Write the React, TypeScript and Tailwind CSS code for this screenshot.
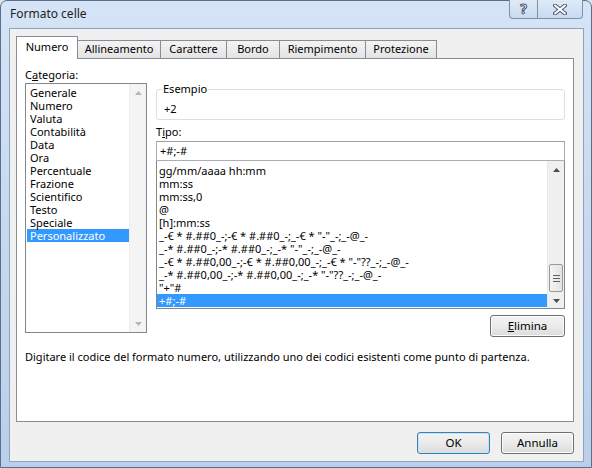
import React from "react";

const categories = [
  "Generale",
  "Numero",
  "Valuta",
  "Contabilità",
  "Data",
  "Ora",
  "Percentuale",
  "Frazione",
  "Scientifico",
  "Testo",
  "Speciale",
  "Personalizzato",
];

const formats = [
  "gg/mm/aaaa hh:mm",
  "mm:ss",
  "mm:ss,0",
  "@",
  "[h]:mm:ss",
  '_-€ * #.##0_-;-€ * #.##0_-;_-€ * "-"_-;_-@_-',
  '_-* #.##0_-;-* #.##0_-;_-* "-"_-;_-@_-',
  '_-€ * #.##0,00_-;-€ * #.##0,00_-;_-€ * "-"??_-;_-@_-',
  '_-* #.##0,00_-;-* #.##0,00_-;_-* "-"??_-;_-@_-',
  '"+"#',
  "+#;-#",
];

const tabs = [
  { label: "Allineamento", w: "w-[84px]" },
  { label: "Carattere", w: "w-[67px]" },
  { label: "Bordo", w: "w-[54px]" },
  { label: "Riempimento", w: "w-[87px]" },
  { label: "Protezione", w: "w-[72px]" },
];

const Arrow = ({ up, dark }: { up?: boolean; dark?: boolean }) => (
  <svg width="7" height="4" viewBox="0 0 7 4" className={up ? "" : "rotate-180"}>
    <path d="M0 4 L3.5 0 L7 4 Z" fill={dark ? "#4d4d4d" : "#b5b5b5"} />
  </svg>
);

const WinButton = ({
  children,
  def,
  className = "",
}: {
  children: React.ReactNode;
  def?: boolean;
  className?: string;
}) => (
  <button
    className={
      "h-[22px] rounded-[3px] border bg-linear-to-b from-[#f3f3f3] via-[#ebebeb] to-[#dcdcdc] text-[11.5px] text-black " +
      (def
        ? "border-[#3c7fb1] shadow-[inset_0_0_0_1px_#c2e4f6] "
        : "border-[#707070] shadow-[inset_0_0_0_1px_#fcfcfc] ") +
      className
    }
  >
    {children}
  </button>
);

export default function App() {
  return (
    <div className="w-[592px] h-[468px] bg-[#dde4ec] font-['Noto_Sans',sans-serif] text-[11px] text-black overflow-hidden">
      <div className="h-full flex flex-col rounded-t-[7px] border border-[#5c6f88] bg-linear-to-b from-[#d5e4f6] via-[#c6d9f0] to-[#b9cfea] pl-[8px] pr-[7px] pb-[5px]">
        {/* title bar */}
        <div className="h-[27px] flex items-start justify-between">
          <span className="pt-[4px] pl-[1px] text-[12px] text-[#1e1e1e]">Formato celle</span>
          <div className="flex mr-[1px] -mt-px">
            <div className="w-[29px] h-[19px] flex items-center justify-center rounded-bl-[4px] border border-t-0 border-[#7f90a8] bg-linear-to-b from-[#dfeaf7] to-[#c9daf0]">
              <span className="text-[14px] font-bold leading-none text-white [-webkit-text-stroke:1px_#4b5b72]">?</span>
            </div>
            <div className="w-[46px] h-[19px] -ml-px flex items-center justify-center rounded-br-[4px] border border-t-0 border-[#7f90a8] bg-linear-to-b from-[#dfeaf7] to-[#c9daf0]">
              <svg width="14" height="11" viewBox="0 0 14 11">
                <path d="M2 1.5 L12 9.5 M12 1.5 L2 9.5" stroke="#4b5b72" strokeWidth="4" strokeLinecap="round" />
                <path d="M2 1.5 L12 9.5 M12 1.5 L2 9.5" stroke="#ffffff" strokeWidth="2" strokeLinecap="round" />
              </svg>
            </div>
          </div>
        </div>

        {/* client area */}
        <div className="flex-1 flex flex-col bg-[#f0f0f0] border border-[#8fa3bd] pl-[6px] pr-[8px] pt-[7px]">
          {/* tabs */}
          <div className="relative z-10 h-[23px] -mb-px flex items-end">
            <div className="w-[62px] h-[23px] flex items-center justify-center pb-[2px] border border-b-0 border-[#898c95] bg-white">
              Numero
            </div>
            {tabs.map((t) => (
              <div
                key={t.label}
                className={
                  t.w +
                  " h-[18px] mb-px -ml-px flex items-center justify-center border border-b-0 border-[#898c95] bg-linear-to-b from-[#f3f3f3] to-[#e4e4e4]"
                }
              >
                {t.label}
              </div>
            ))}
          </div>

          {/* panel */}
          <div className="w-[558px] h-[364px] border border-[#898c95] bg-white flex flex-col px-[8px]">
            <div className="flex gap-[9px]">
              {/* category column */}
              <div className="pt-[8px] flex flex-col">
                <div className="h-[16px] leading-[16px]">
                  C<span className="underline">a</span>tegoria:
                </div>
                <div className="w-[122px] h-[250px] border border-[#828790] bg-white flex">
                  <div className="flex-1 pt-[1.5px] pl-px">
                    {categories.map((c) => (
                      <div
                        key={c}
                        className={
                          "h-[13px] leading-[13px] pl-[3px] " +
                          (c === "Personalizzato" ? "bg-[#3399ff] text-white" : "")
                        }
                      >
                        {c}
                      </div>
                    ))}
                  </div>
                  <div className="w-[17px] flex flex-col justify-between bg-[#f4f4f4] border-l border-[#ececec]">
                    <div className="h-[17px] flex items-center justify-center">
                      <Arrow up />
                    </div>
                    <div className="h-[17px] flex items-center justify-center">
                      <Arrow />
                    </div>
                  </div>
                </div>
              </div>

              {/* type column */}
              <div className="w-[411px] pt-[22px] flex flex-col">
                <fieldset className="h-[39px] border border-[#d5dfe5] rounded-[3px] pl-[6px] pr-[6px]">
                  <legend className="px-[1px] -ml-[1px] leading-[16px]">Esempio</legend>
                  <div className="pt-[4px] leading-[16px] pl-px">+2</div>
                </fieldset>
                <div className="mt-[4px] h-[16px] leading-[16px]">
                  T<span className="underline">i</span>po:
                </div>
                <div className="mt-[1px] h-[20px] border border-[#abadb3] border-t-[#a0a3aa] bg-white pl-[3px] leading-[18px]">
                  +#;-#
                </div>
                <div className="h-[148px] border border-[#828790] border-t-0 bg-white flex">
                  <div className="flex-1 pt-[3px]">
                    {formats.map((f, i) => (
                      <div
                        key={f}
                        className={
                          "h-[13px] leading-[13px] pl-[2px] whitespace-pre " +
                          (i === formats.length - 1 ? "bg-[#3399ff] text-white" : "")
                        }
                      >
                        {f}
                      </div>
                    ))}
                  </div>
                  <div className="w-[17px] flex flex-col bg-[#f0f0f0] border-l border-[#e8e8e8]">
                    <div className="h-[17px] flex items-center justify-center">
                      <Arrow up dark />
                    </div>
                    <div className="flex-1 flex flex-col justify-end px-px pb-[1px]">
                      <div className="h-[28px] rounded-[2px] border border-[#9a9a9a] bg-linear-to-r from-[#f4f4f4] to-[#e2e2e2] flex flex-col items-center justify-center gap-[2px]">
                        <div className="w-[7px] h-px bg-[#606060]" />
                        <div className="w-[7px] h-px bg-[#606060]" />
                        <div className="w-[7px] h-px bg-[#606060]" />
                      </div>
                    </div>
                    <div className="h-[15px] flex items-center justify-center">
                      <Arrow dark />
                    </div>
                  </div>
                </div>
                <div className="mt-[6px] flex justify-end">
                  <WinButton className="w-[75px]">
                    <span className="underline">E</span>limina
                  </WinButton>
                </div>
              </div>
            </div>
            <div className="mt-[12px] leading-[16px] whitespace-nowrap">
              Digitare il codice del formato numero, utilizzando uno dei codici esistenti come punto di partenza.
            </div>
          </div>

          {/* dialog buttons */}
          <div className="mt-[10px] flex justify-end gap-[11px] pr-px">
            <WinButton def className="w-[73px]">
              OK
            </WinButton>
            <WinButton className="w-[73px]">Annulla</WinButton>
          </div>
        </div>
      </div>
    </div>
  );
}
